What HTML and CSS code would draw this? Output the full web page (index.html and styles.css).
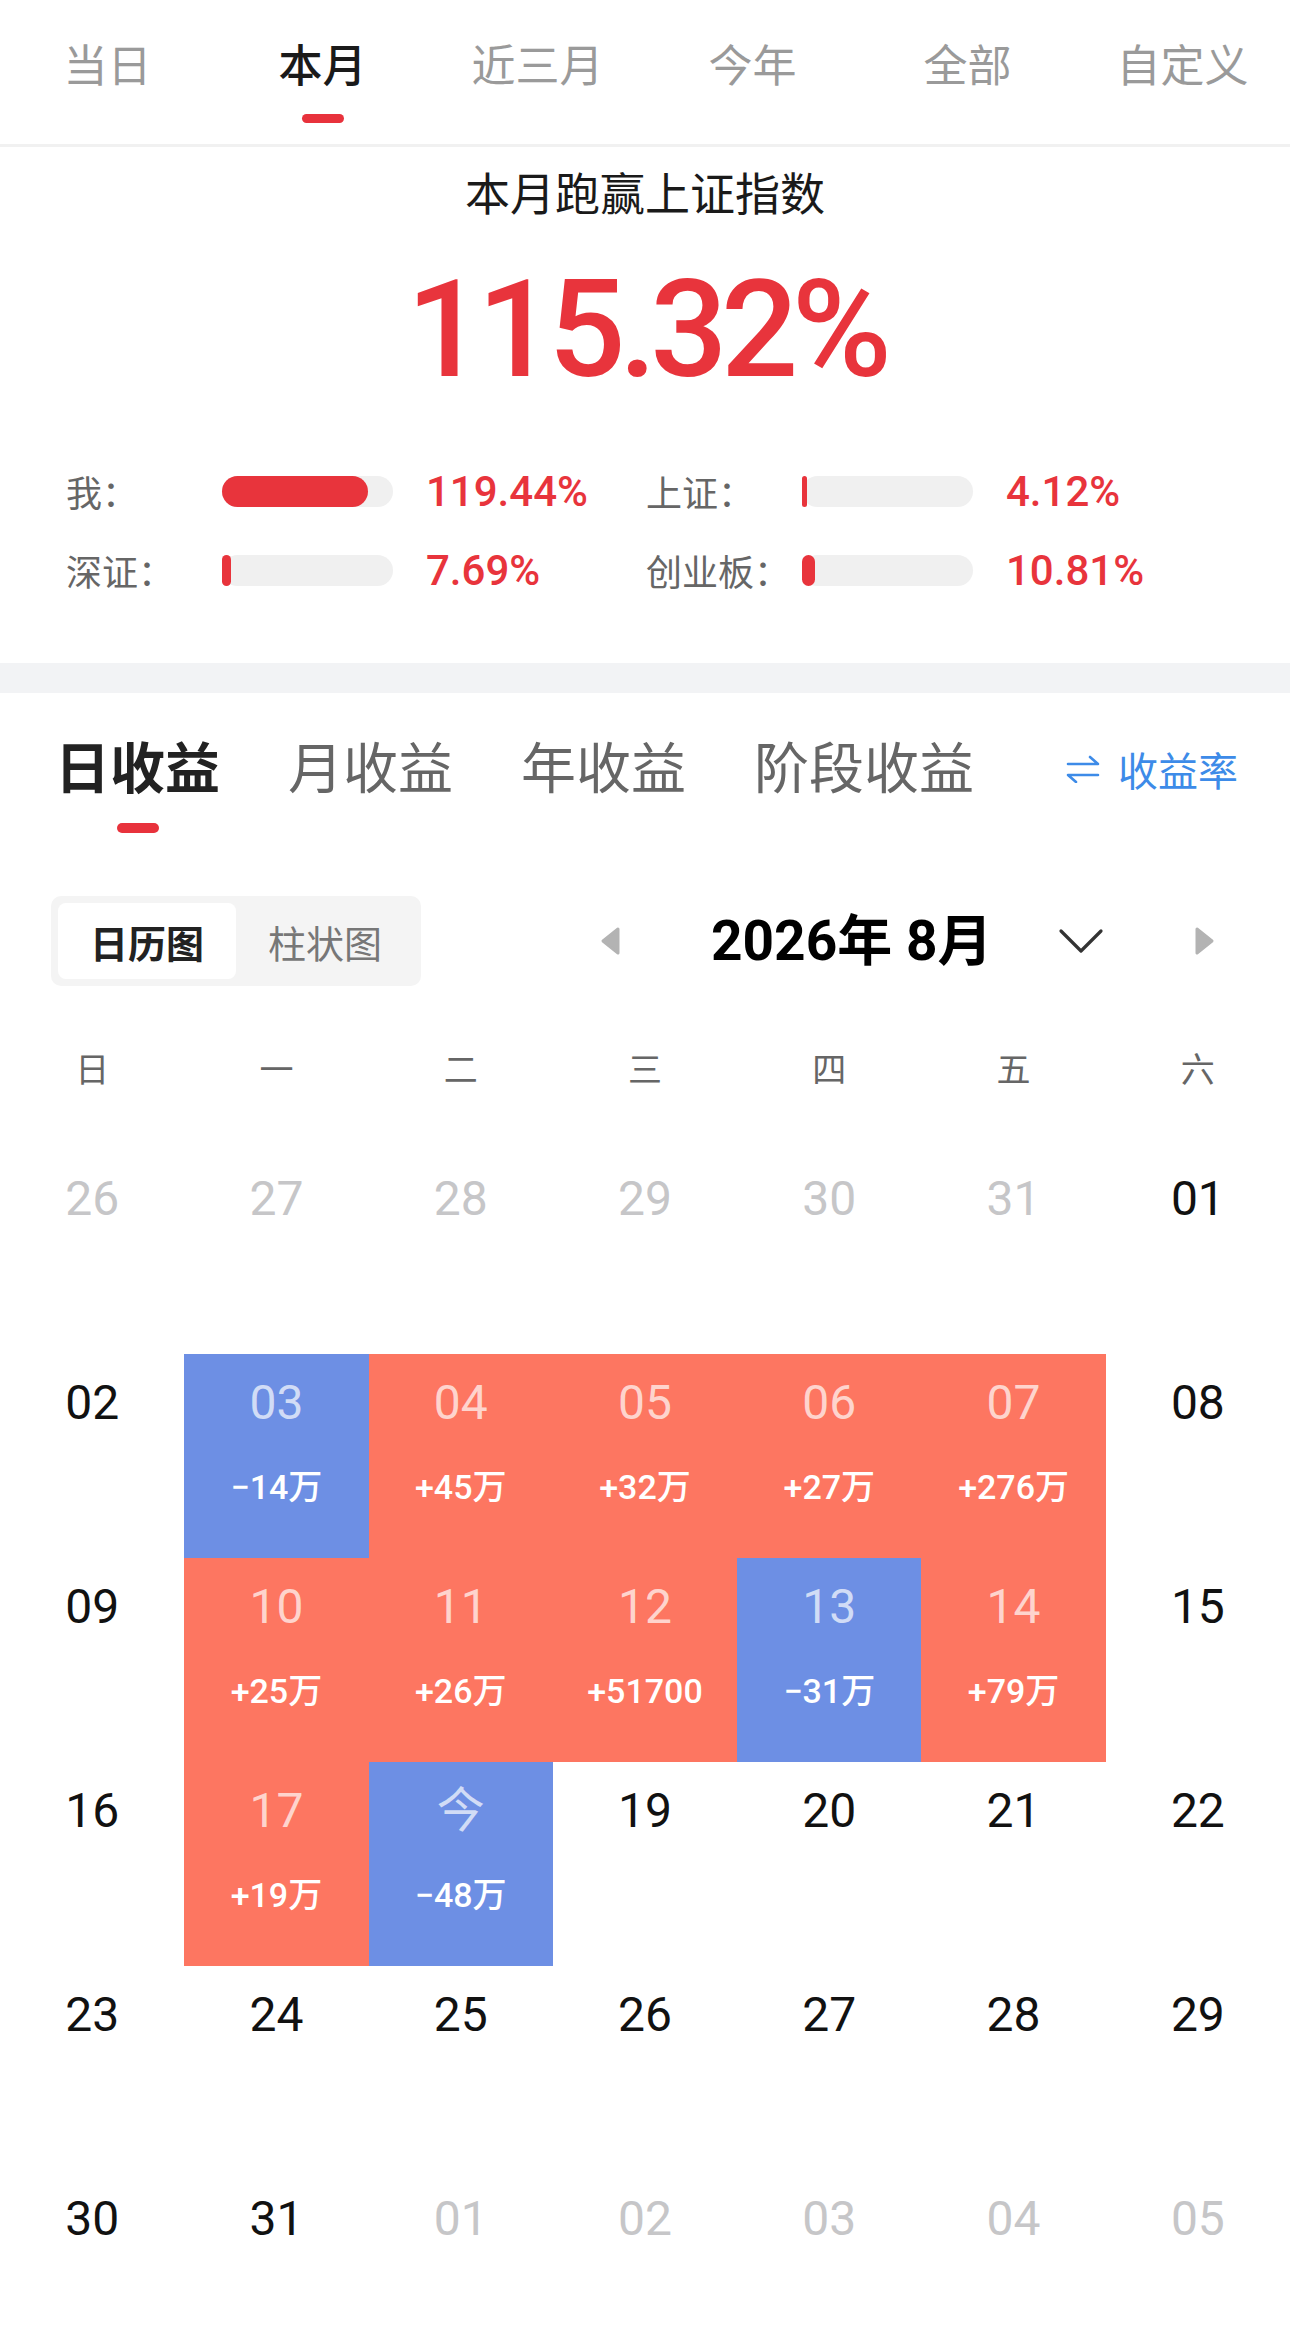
FILE: index.html
```html
<!DOCTYPE html>
<html lang="zh-CN">
<head>
<meta charset="utf-8">
<title>收益日历</title>
<link rel="stylesheet" href="styles.css">
</head>
<body>
<nav class="range-tabs">
  <div class="range-tab"><span>当日</span></div>
  <div class="range-tab active"><span>本月</span><i class="bar"></i></div>
  <div class="range-tab"><span>近三月</span></div>
  <div class="range-tab"><span>今年</span></div>
  <div class="range-tab"><span>全部</span></div>
  <div class="range-tab"><span>自定义</span></div>
</nav>

<section class="summary">
  <h1 class="summary-title">本月跑赢上证指数</h1>
  <div class="summary-value">115.32%</div>
  <div class="stats">
    <div class="stat"><span class="stat-label">我：</span><div class="track"><div class="fill" style="width:85.3%"></div></div><span class="stat-value">119.44%</span></div>
    <div class="stat"><span class="stat-label">上证：</span><div class="track"><div class="fill" style="width:2.9%"></div></div><span class="stat-value">4.12%</span></div>
    <div class="stat"><span class="stat-label">深证：</span><div class="track"><div class="fill" style="width:5.5%"></div></div><span class="stat-value">7.69%</span></div>
    <div class="stat"><span class="stat-label">创业板：</span><div class="track"><div class="fill" style="width:7.7%"></div></div><span class="stat-value">10.81%</span></div>
  </div>
</section>

<div class="band"></div>

<nav class="profit-tabs">
  <div class="profit-tab active"><span>日收益</span><i class="bar"></i></div>
  <div class="profit-tab"><span>月收益</span></div>
  <div class="profit-tab"><span>年收益</span></div>
  <div class="profit-tab"><span>阶段收益</span></div>
  <div class="rate-link">
    <svg class="swap-icon" width="34" height="28" viewBox="0 0 34 28"><path d="M2 9 H32 L24 2 M32 20 H2 L10 27" fill="none" stroke="#3d8be8" stroke-width="2.6" stroke-linecap="round" stroke-linejoin="round"/></svg>
    <span>收益率</span>
  </div>
</nav>

<div class="toolbar">
  <div class="segmented">
    <div class="seg active">日历图</div>
    <div class="seg">柱状图</div>
  </div>
  <svg class="prev" width="22" height="30" viewBox="0 0 22 30"><path d="M19 3 L4 15 L19 27 Z" fill="#b3b3b3" stroke="#b3b3b3" stroke-width="3" stroke-linejoin="round"/></svg>
  <div class="month-title">2026年 8月</div>
  <svg class="chev" width="46" height="26" viewBox="0 0 46 26"><polyline points="3,3 23,23 43,3" fill="none" stroke="#333" stroke-width="3.2" stroke-linecap="round" stroke-linejoin="round"/></svg>
  <svg class="next" width="22" height="30" viewBox="0 0 22 30"><path d="M3 3 L18 15 L3 27 Z" fill="#b3b3b3" stroke="#b3b3b3" stroke-width="3" stroke-linejoin="round"/></svg>
</div>

<div class="weekdays">
  <span>日</span><span>一</span><span>二</span><span>三</span><span>四</span><span>五</span><span>六</span>
</div>

<div class="calendar">
  <div class="day other"><span class="day-num">26</span></div>
  <div class="day other"><span class="day-num">27</span></div>
  <div class="day other"><span class="day-num">28</span></div>
  <div class="day other"><span class="day-num">29</span></div>
  <div class="day other"><span class="day-num">30</span></div>
  <div class="day other"><span class="day-num">31</span></div>
  <div class="day"><span class="day-num">01</span></div>

  <div class="day"><span class="day-num">02</span></div>
  <div class="day loss"><span class="day-num">03</span><span class="day-amt">−14万</span></div>
  <div class="day gain"><span class="day-num">04</span><span class="day-amt">+45万</span></div>
  <div class="day gain"><span class="day-num">05</span><span class="day-amt">+32万</span></div>
  <div class="day gain"><span class="day-num">06</span><span class="day-amt">+27万</span></div>
  <div class="day gain"><span class="day-num">07</span><span class="day-amt">+276万</span></div>
  <div class="day"><span class="day-num">08</span></div>

  <div class="day"><span class="day-num">09</span></div>
  <div class="day gain"><span class="day-num">10</span><span class="day-amt">+25万</span></div>
  <div class="day gain"><span class="day-num">11</span><span class="day-amt">+26万</span></div>
  <div class="day gain"><span class="day-num">12</span><span class="day-amt">+51700</span></div>
  <div class="day loss"><span class="day-num">13</span><span class="day-amt">−31万</span></div>
  <div class="day gain"><span class="day-num">14</span><span class="day-amt">+79万</span></div>
  <div class="day"><span class="day-num">15</span></div>

  <div class="day"><span class="day-num">16</span></div>
  <div class="day gain"><span class="day-num">17</span><span class="day-amt">+19万</span></div>
  <div class="day loss"><span class="day-num">今</span><span class="day-amt">−48万</span></div>
  <div class="day"><span class="day-num">19</span></div>
  <div class="day"><span class="day-num">20</span></div>
  <div class="day"><span class="day-num">21</span></div>
  <div class="day"><span class="day-num">22</span></div>

  <div class="day"><span class="day-num">23</span></div>
  <div class="day"><span class="day-num">24</span></div>
  <div class="day"><span class="day-num">25</span></div>
  <div class="day"><span class="day-num">26</span></div>
  <div class="day"><span class="day-num">27</span></div>
  <div class="day"><span class="day-num">28</span></div>
  <div class="day"><span class="day-num">29</span></div>

  <div class="day"><span class="day-num">30</span></div>
  <div class="day"><span class="day-num">31</span></div>
  <div class="day other"><span class="day-num">01</span></div>
  <div class="day other"><span class="day-num">02</span></div>
  <div class="day other"><span class="day-num">03</span></div>
  <div class="day other"><span class="day-num">04</span></div>
  <div class="day other"><span class="day-num">05</span></div>
</div>
</body>
</html>
```

FILE: styles.css
```css
* {
  box-sizing: border-box;
  margin: 0;
  padding: 0;
}

body {
  width: 1290px;
  background: #fff;
  font-family: Roboto, "Noto Sans CJK SC", sans-serif;
  color: #111;
  overflow: hidden;
}

/* top range tabs */
.range-tabs {
  display: flex;
  height: 147px;
  border-bottom: 3px solid #f1f1f1;
}

.range-tab {
  flex: 1;
  display: flex;
  flex-direction: column;
  align-items: center;
  padding-top: 37px;
  font-size: 44px;
  line-height: 60px;
  color: #9a9a9a;
}

.range-tab.active {
  color: #1a1a1a;
  font-weight: 500;
}

.range-tab .bar {
  display: block;
  width: 42px;
  height: 9px;
  border-radius: 5px;
  background: #e8323c;
  margin-top: 17px;
}

/* summary */
.summary {
  padding: 19px 0 69px;
}

.summary-title {
  text-align: center;
  font-size: 45px;
  line-height: 60px;
  font-weight: 400;
  color: #1a1a1a;
}

.summary-value {
  text-align: center;
  margin-top: 34px;
  padding-left: 2px;
  font-size: 136px;
  line-height: 140px;
  font-weight: 500;
  letter-spacing: -6.5px;
  color: #e8343c;
}

.stats {
  margin-top: 65px;
  padding-left: 66px;
  display: grid;
  grid-template-columns: 580px 580px;
  row-gap: 29px;
}

.stat {
  display: grid;
  grid-template-columns: 156px 171px auto;
  align-items: center;
  height: 50px;
}

.stat-label {
  font-size: 36px;
  color: #666;
}

.track {
  height: 31px;
  border-radius: 16px;
  background: #f0f0f0;
}

.fill {
  height: 100%;
  border-radius: 16px;
  background: #e8343c;
}

.stat-value {
  margin-left: 33px;
  font-size: 42px;
  font-weight: 500;
  color: #e8343c;
}

.band {
  height: 30px;
  background: #f2f3f5;
}

/* profit tabs */
.profit-tabs {
  display: flex;
  align-items: flex-start;
  gap: 68px;
  padding: 41px 52px 0 55px;
}

.profit-tab {
  display: flex;
  flex-direction: column;
  align-items: center;
  font-size: 55px;
  line-height: 70px;
  color: #666;
}

.profit-tab.active {
  color: #222;
  font-weight: 700;
}

.profit-tab .bar {
  display: block;
  width: 42px;
  height: 10px;
  border-radius: 5px;
  background: #e8323c;
  margin-top: 19px;
}

.rate-link {
  margin-left: auto;
  height: 70px;
  display: flex;
  align-items: center;
  gap: 18px;
  font-size: 40px;
  color: #3d8be8;
}

/* toolbar */
.toolbar {
  display: flex;
  align-items: center;
  margin-top: 63px;
  padding-left: 51px;
  height: 90px;
}

.segmented {
  display: flex;
  width: 370px;
  height: 90px;
  padding: 7px;
  border-radius: 10px;
  background: #f4f4f4;
}

.seg {
  width: 178px;
  height: 76px;
  display: flex;
  align-items: center;
  justify-content: center;
  font-size: 38px;
  color: #777;
}

.seg.active {
  background: #fff;
  border-radius: 8px;
  color: #222;
  font-weight: 700;
}

.prev {
  margin-left: 178px;
}

.month-title {
  margin-left: 90px;
  font-size: 55px;
  line-height: 70px;
  font-weight: 700;
  color: #000;
}

.chev {
  margin-left: 66px;
}

.next {
  margin-left: 90px;
}

/* weekday header */
.weekdays {
  display: grid;
  grid-template-columns: repeat(7, 1fr);
  padding: 59px 0 55px;
  font-size: 34px;
  line-height: 50px;
  color: #666;
  text-align: center;
}

/* calendar */
.calendar {
  display: grid;
  grid-template-columns: repeat(7, 1fr);
  grid-auto-rows: 204px;
}

.day {
  display: flex;
  flex-direction: column;
  align-items: center;
}

.day-num {
  margin-top: 21px;
  font-size: 48px;
  line-height: 56px;
  color: #111;
}

.day.other .day-num {
  color: #c6c6c8;
}

.day-amt {
  margin-top: 34px;
  font-size: 34px;
  line-height: 44px;
  font-weight: 500;
  color: #fff;
}

.day.gain {
  background: #fd7661;
}

.day.loss {
  background: #6d8fe4;
}

.day.gain .day-num,
.day.loss .day-num {
  color: rgba(255, 255, 255, 0.7);
}
```
